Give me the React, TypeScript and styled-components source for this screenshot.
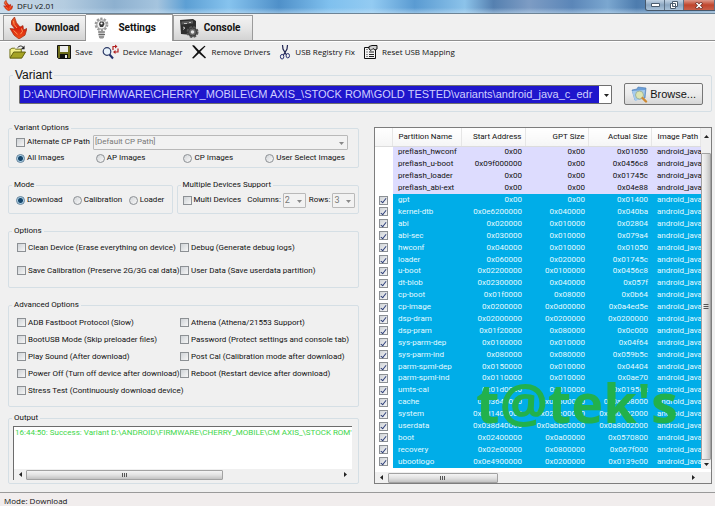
import React from 'react';
import styled, { createGlobalStyle, css } from 'styled-components';

const small = `'Roboto', 'Liberation Sans', sans-serif`;
const arial = `'Liberation Sans', Arial, sans-serif`;
const segoe = `'Open Sans', 'Noto Sans', sans-serif`;

const GlobalStyle = createGlobalStyle`
  *, *::before, *::after { box-sizing: border-box; }
  body { margin: 0; background: #f0f0f0; color: #111; font: 8px/10px ${small}; }
  button, select, input, textarea { font: inherit; color: inherit; margin: 0; }
`;

const Window = styled.div`
  min-height: 100vh;
  display: flex;
  flex-direction: column;
`;

/* ---------- title bar ---------- */
const TitleBar = styled.header`
  display: flex;
  align-items: flex-start;
  height: 14px;
  padding-left: 3px;
  border-bottom: 1px solid #6d8496;
  background:
    linear-gradient(180deg, transparent 60%, rgba(205, 228, 246, 0.5) 100%),
    linear-gradient(90deg, #c9d8e6 0%, #b4cce0 9%, #8db0cf 16%, #a5c4de 22%, #5c9fd4 26%, #86c3ee 32%,
      #4f90c9 39%, #7fc0ee 46%, #93cbf2 52%, #5a9bd2 58%, #8cc3ea 65%, #5580b0 69%, #7d9cc4 74%,
      #5b86b8 80%, #7ba7d0 85%, #4d7cae 89%, #88a9c8 100%);
`;
const Title = styled.h1`
  flex: 1;
  margin: 0;
  padding-left: 4px;
  font: 400 8px/11px ${segoe};
`;
const WindowButtons = styled.div`
  display: flex;
  border: 1px solid #46586b;
  border-width: 0 0 1px 1px;
  border-radius: 0 0 0 3px;
  overflow: hidden;
`;
const WindowButton = styled.button<{ $close?: boolean }>`
  display: flex;
  align-items: center;
  justify-content: center;
  width: ${p => (p.$close ? 31 : 19)}px;
  height: 10px;
  padding: 0;
  border: 0;
  border-right: 1px solid #5d7186;
  background: ${p => (p.$close
    ? 'linear-gradient(#dd9a8c, #c0452c 50%, #c9604a)'
    : 'linear-gradient(#c2d3e4, #8ba6c1 50%, #a9c2d9)')};
`;

/* ---------- tabs ---------- */
const Tabs = styled.nav`
  display: flex;
  align-items: flex-end;
  height: 27px;
  padding-left: 3px;
  border-bottom: 1px solid #8f8f8f;
  box-shadow: 0 1px 0 #fff;
`;
const Tab = styled.button<{ $active?: boolean; $gap: number; $end: number }>`
  display: flex;
  align-items: center;
  gap: ${p => p.$gap}px;
  height: ${p => (p.$active ? 27 : 25)}px;
  margin-bottom: ${p => (p.$active ? -1 : 0)}px;
  padding: 0 ${p => p.$end}px 0 ${p => (p.$active ? 8 : 5)}px;
  border: 1px solid #9b9b9b;
  border-bottom: 0;
  border-left-width: ${p => (p.$active ? 0 : 1)}px;
  background: ${p => (p.$active ? '#fff' : 'linear-gradient(#f3f3f3, #e6e6e6 50%, #d3d3d3)')};
  font: 700 10px/12px ${small};
  color: #111;
`;

/* ---------- toolbar ---------- */
const Toolbar = styled.div`
  display: flex;
  flex-wrap: wrap;
  gap: 0 9px;
  padding: 1px 9px 0;
`;
const ToolButton = styled.button`
  display: flex;
  align-items: center;
  gap: 4px;
  height: 20px;
  padding: 0;
  border: 0;
  background: none;
  font: 8px/10px ${segoe};
`;

/* ---------- groups ---------- */
const Group = styled.fieldset`
  min-width: 0;
  margin: 0;
  padding: 0;
  border: 1px solid #d5dfe5;
  border-radius: 2px;
`;
const GroupBody = styled.div<{ $pad: string }>`
  padding: ${p => p.$pad};
`;
const Legend = styled.legend<{ $large?: boolean }>`
  margin-left: 3px;
  padding: 0 2px;
  ${p => p.$large && css`font: 12px/14px ${arial};`}
`;
const VariantGroup = styled(Group)`
  margin: 6px 3px 0 9px;
`;
const VariantRow = styled.div`
  display: flex;
  align-items: center;
  gap: 12px;
  padding: 1px 8px 6px 9px;
`;
const Main = styled.main`
  display: flex;
  align-items: stretch;
  gap: 15px;
  margin: 11px 3px 8px 8px;
`;
const LeftColumn = styled.div`
  flex: 352 1 0;
  min-width: 0;
  display: flex;
  flex-direction: column;
  gap: 6px;
`;
const Stack = styled.div`
  display: flex;
  flex-direction: column;
  gap: 12px;
`;
const Pair = styled.div`
  display: grid;
  grid-template-columns: minmax(0, 165fr) minmax(0, 183fr);
  gap: 4px;
`;
const OptionGrid = styled.div<{ $cols: number[]; $row: number }>`
  display: grid;
  grid-template-columns: ${p => p.$cols.map(c => `minmax(0, ${c}fr)`).join(' ')};
  grid-auto-rows: ${p => p.$row}px;
  align-items: center;
`;
const InlineRow = styled.div<{ $gap: number }>`
  display: flex;
  align-items: center;
  height: 16px;
  gap: ${p => p.$gap}px;
`;

const Label = styled.label`
  display: inline-flex;
  align-items: center;
  gap: 2px;
  white-space: nowrap;
`;
const CheckBox = styled.input.attrs({ type: 'checkbox' })`
  appearance: none;
  flex: none;
  display: grid;
  place-items: center;
  width: 9px;
  height: 9px;
  border: 1px solid #8c9094;
  background: linear-gradient(135deg, #cfd3d7, #f6f6f6);
  &:checked::before {
    content: '';
    width: 3px;
    height: 6px;
    border: solid #2b3d78;
    border-width: 0 1px 1px 0;
    transform: rotate(38deg);
  }
`;
const Radio = styled.input.attrs({ type: 'radio' })`
  appearance: none;
  flex: none;
  width: 9px;
  height: 9px;
  border: 1px solid #8c9094;
  border-radius: 50%;
  background: linear-gradient(135deg, #d3d6d9, #f8f8f8);
  &:checked {
    border-color: #5f7f99;
    background: radial-gradient(circle, #16466b 0 2px, #a9cfe6 3px, #dff0fa 4px);
  }
`;

const ComboFrame = styled.span<{ $variant?: boolean; $grow?: boolean }>`
  position: relative;
  display: flex;
  flex: ${p => (p.$grow || p.$variant ? '1 1 0' : 'none')};
  min-width: 0;
  svg {
    position: absolute;
    right: ${p => (p.$variant ? 3 : 4)}px;
    top: calc(50% - 1px);
    pointer-events: none;
  }
`;
const Combo = styled.select`
  appearance: none;
  width: 100%;
  height: 15px;
  padding: 0 14px 0 1px;
  border: 1px solid #b9b9b9;
  border-radius: 1px;
  background: #f2f2f2;
  color: #777;
  opacity: 1;
`;
const NumberCombo = styled(Combo)`
  width: 23px;
  padding: 0 10px 0 1px;
  font-size: 9px;
`;
const VariantCombo = styled(Combo)`
  height: 19px;
  padding: 0 14px 0 3px;
  border: 1px solid #6f6f6f;
  background: linear-gradient(90deg, #1f16cc calc(100% - 12px), #fff calc(100% - 12px));
  color: #cfcfff;
  font: 11px/16px ${arial};
`;
const Browse = styled.button`
  display: flex;
  align-items: center;
  gap: 2px;
  height: 22px;
  padding: 0 6px;
  border: 1px solid #777;
  border-radius: 2px;
  background: linear-gradient(#f3f3f3, #ebebeb 50%, #d6d6d6);
  font: 11px/13px ${arial};
`;

/* ---------- output ---------- */
const OutputBox = styled.div`
  display: flex;
  flex-direction: column;
  height: 54px;
  border: solid #6c6c6c;
  border-width: 1px 0 0 1px;
  background: #fff;
`;
const OutputText = styled.textarea`
  flex: 1;
  display: block;
  min-height: 0;
  padding: 1px 0 0 1px;
  border: 0;
  outline: 0;
  resize: none;
  overflow: hidden;
  background: none;
  color: #3ed64a;
  white-space: pre;
`;

/* ---------- scroll bars ---------- */
const HBar = styled.div`
  display: flex;
  align-items: center;
  height: 11px;
  flex: none;
  background: #f0f0f0;
`;
const HSpace = styled.div<{ $grow: number }>`
  flex: ${p => p.$grow} 1 0;
`;
const Thumb = styled.div<{ $grow: number; $vertical?: boolean }>`
  flex: ${p => p.$grow} 1 0;
  display: flex;
  align-items: center;
  justify-content: center;
  ${p => (p.$vertical ? 'width: 10px;' : 'height: 10px;')}
  border: 1px solid #a2a2a2;
  border-radius: 1px;
  background: linear-gradient(${p => (p.$vertical ? '90deg' : '180deg')}, #f4f4f4, #e2e2e2 50%, #c2c2c2);
`;
const ArrowCell = styled.div<{ $w: number; $h: number }>`
  flex: none;
  display: flex;
  align-items: center;
  justify-content: center;
  width: ${p => p.$w}px;
  height: ${p => p.$h}px;
`;
const VBar = styled.div`
  flex: none;
  display: flex;
  flex-direction: column;
  width: 10px;
  background: #f0f0f0;
`;
const TopArrowCell = styled(ArrowCell)`
  margin-bottom: 9px;
`;

/* ---------- partition list ---------- */
const ListFrame = styled.section`
  position: relative;
  flex: 337 1 0;
  min-width: 0;
  display: flex;
  flex-direction: column;
  margin-top: 4px;
  border: 1px solid #7d7d7d;
  background: #fff;
`;
const ListBody = styled.div`
  flex: 1;
  display: flex;
  min-height: 0;
  margin-bottom: 3px;
`;
const TableClip = styled.div`
  flex: 1;
  min-width: 0;
  overflow: hidden;
`;
const Table = styled.table`
  width: 100%;
  height: 340px;
  table-layout: fixed;
  border-collapse: collapse;
`;
const Col = styled.col<{ $w?: number }>`
  ${p => p.$w && `width: ${p.$w}px;`}
`;
const Head = styled.th<{ $right?: boolean }>`
  height: 18px;
  padding: 0 4px 0 5px;
  border-right: 1px solid #e6e6e6;
  border-bottom: 1px solid #dcdcdc;
  background: linear-gradient(#fff, #f5f5f5);
  font-weight: 400;
  text-align: ${p => (p.$right ? 'right' : 'left')};
  white-space: nowrap;
  overflow: hidden;
`;
const Row = styled.tr<{ $pre: boolean }>`
  background: ${p => (p.$pre ? '#dddcfe' : '#00ade8')};
  color: ${p => (p.$pre ? '#111' : '#e4faff')};
`;
const Cell = styled.td<{ $right?: boolean }>`
  padding: 0 4px 0 5px;
  text-align: ${p => (p.$right ? 'right' : 'left')};
  white-space: nowrap;
  overflow: hidden;
`;
const TickCell = styled.td`
  padding: 0 0 0 4px;
  background: #fff;
`;
const Watermark = styled.div`
  position: absolute;
  left: 101px;
  bottom: 54px;
  color: #22b14c;
  font: 700 54px/54px ${segoe};
  white-space: nowrap;
  pointer-events: none;
`;
const StatusBar = styled.footer`
  flex: 1;
  padding: 2px 4px 0;
  border-top: 1px solid #9a9a9a;
  background: #f1eded;
  font: 8px/11px ${segoe};
`;

/* ---------- icons ---------- */
const Flame = ({ w, h }: { w: number; h: number }) => (
  <svg width={w} height={h} viewBox="0 0 18 23" preserveAspectRatio="none" aria-hidden="true">
    <defs>
      <linearGradient id="flame" x1="0" y1="0" x2="0" y2="1">
        <stop offset="0" stopColor="#e8632a" /><stop offset="0.5" stopColor="#d8210c" /><stop offset="1" stopColor="#f0501a" />
      </linearGradient>
    </defs>
    <path d="M5.500 0Q1 4 2.500 8L6 12.500 1 12 5 19l5 4 6-4 2-7-3.500 1.500L14 9l-3 1.500L7.500 6z" fill="url(#flame)" stroke="#9c2a14" strokeWidth=".7" />
    <path d="M4.500 4Q4 8 8 11.500M4.500 14l4 4M12.500 12l1 3-2 3" stroke="#ff9a58" fill="none" strokeWidth="1" />
  </svg>
);
const GearBulb = () => (
  <svg width="15" height="23" viewBox="0 0 15 23" aria-hidden="true">
    <circle cx="7.5" cy="7.5" r="5.6" fill="#e4e4e4" stroke="#9a9a9a" strokeWidth="2.6" strokeDasharray="2.2 1.3" />
    <circle cx="7.5" cy="7.5" r="4.6" fill="#f3f3f3" stroke="#a2a2a2" />
    <path d="M6 4.500h3.500l1 2.500-1.500 3H6L5 7z" fill="#3c3c3c" />
    <circle cx="7.500" cy="6.500" r="1.100" fill="#fff" />
    <path d="M4.500 14h6v5l-1.500 3h-3l-1.500-3z" fill="#c4c4c4" />
    <path d="M4 15h7M4.500 17.500h6.500M5 20h5" stroke="#666" />
  </svg>
);
const ConsoleGear = () => (
  <svg width="20" height="21" viewBox="0 0 20 21" aria-hidden="true">
    <path d="M1 2 14 1l3 2v9L13 17 2 16z" fill="#2d2d2d" />
    <path d="M2.500 3.500 14 2.500v3L2.500 6.500z" fill="#5b5b5b" />
    <path d="M4 9l2 1-2 1.500M5 5.500h3M10 4.500h2" stroke="#ddd" fill="none" strokeWidth=".8" />
    <circle cx="13.500" cy="14" r="4.800" fill="#555" stroke="#555" strokeWidth="2.400" strokeDasharray="2.400 1.400" />
    <circle cx="13.500" cy="14" r="4" fill="#666" stroke="#3a3a3a" />
    <circle cx="13.500" cy="14" r="1.800" fill="#e4e4e4" />
  </svg>
);
const FolderIcon = () => (
  <svg width="17" height="16" viewBox="0 0 18 16" aria-hidden="true">
    <path d="M1 14V5h1l1-1h3l1 1h6v3" fill="#f3f08a" stroke="#6b6a10" />
    <path d="M1 14.500 5 8h12.500l-4 6.500z" fill="#a5a324" stroke="#5a590c" />
    <path d="M9 3.500Q12 0 15 3" stroke="#222" fill="none" />
    <path d="M16.500 1v4h-4z" fill="#222" />
  </svg>
);
const FloppyIcon = () => (
  <svg width="14" height="14" viewBox="0 0 14 14" aria-hidden="true">
    <path d="M.5.5h13v13H1.500l-1-1z" fill="#6e6d1c" stroke="#111" />
    <path d="M3 1h8v6H3z" fill="#ececec" />
    <path d="M3 9h8v4.500H3z" fill="#111" />
    <path d="M8 10h2v3H8z" fill="#ececec" />
  </svg>
);
const SearchIcon = () => (
  <svg width="17" height="16" viewBox="0 0 17 16" aria-hidden="true">
    <circle cx="5" cy="7.500" r="3.800" fill="#e9f3fb" stroke="#2c3a66" strokeWidth="1.200" />
    <path d="M7.500 10.500 11 14.500" stroke="#23306b" strokeWidth="2" />
    <path d="M11 6V2.500h2.500M16 4.500V8h-3" stroke="#b32020" fill="none" strokeWidth="1.200" />
    <path d="M13 .5l2.500 2L13 4.500zM13.500 6v4L11 8z" fill="#b32020" />
  </svg>
);
const CrossIcon = () => (
  <svg width="16" height="14" viewBox="0 0 16 14" aria-hidden="true">
    <path d="M1 .5 3 .2 8 5.500 13.500.8l1 .4L9.300 6.800 15 12.500l-1 1L8 8.300 2.500 13.500 1 13 6.500 7z" fill="#111" />
  </svg>
);
const ScissorsIcon = () => (
  <svg width="12" height="16" viewBox="0 0 11 16" aria-hidden="true">
    <path d="M3 1l.5 4L7 11M8 1l-.5 4L4 11" stroke="#1d2150" fill="none" strokeWidth="1.200" />
    <ellipse cx="2.600" cy="12.700" rx="1.700" ry="2.300" fill="none" stroke="#2a3070" />
    <ellipse cx="8.300" cy="11.700" rx="1.700" ry="2.200" fill="none" stroke="#2a3070" />
  </svg>
);
const PropertiesIcon = () => (
  <svg width="14" height="14" viewBox="0 0 14 14" aria-hidden="true">
    <path d="M.5 2.500h11v11H.5z" fill="#f4f4f4" stroke="#111" />
    <path d="M5 1.500 8 .5h5v3.500l-2 1-2-1.500-2 2-2-1.500z" fill="#cfcfcf" stroke="#111" />
    <path d="M2.500 7h1M5 7h5M2.500 9.500h1M5 9.500h5M2.500 11.500h1M5 11.500h5M2.500 4.500h1" stroke="#222" />
  </svg>
);
const BrowseIcon = () => (
  <svg width="17" height="17" viewBox="0 0 17 17" aria-hidden="true">
    <path d="M1 4l5-1 1-2 8 1-1 10-10 2z" fill="#6b9fd8" stroke="#4a78b0" strokeWidth=".6" />
    <path d="M1 5l13-1-1 8-9 3z" fill="#a6cbee" />
    <circle cx="8.500" cy="9" r="4" fill="#e6e9a4" fillOpacity=".85" stroke="#9db4a0" />
    <path d="M11.500 12l3.500 3.500" stroke="#cf8a32" strokeWidth="2.400" strokeLinecap="round" />
  </svg>
);
const Arrow = ({ dir, color = '#222' }: { dir: 'up' | 'down' | 'left' | 'right'; color?: string }) => {
  const d = { up: 'M0 4 2.500 1 5 4z', down: 'M0 1h5L2.500 4z', left: 'M4 0v5L1 2.500z', right: 'M1 0v5l3-2.500z' }[dir];
  return <svg width="5" height="5" viewBox="0 0 5 5" aria-hidden="true"><path d={d} fill={color} /></svg>;
};
const Grip = ({ vertical }: { vertical?: boolean }) => (
  <svg width="6" height="6" viewBox="0 0 6 6" aria-hidden="true">
    <path d={vertical ? 'M.5.5h5M.5 2.500h5M.5 4.500h5' : 'M.5 1v4M2.500 1v4M4.500 1v4'} stroke="#555" />
  </svg>
);

/* ---------- data ---------- */
const partitions: [string, string, string, string][] = [
  ['preflash_hwconf', '0x00', '0x00', '0x01050'],
  ['preflash_u-boot', '0x09f000000', '0x00', '0x0456c8'],
  ['preflash_loader', '0x00', '0x00', '0x01745c'],
  ['preflash_abi-ext', '0x00', '0x00', '0x04e88'],
  ['gpt', '0x00', '0x00', '0x01400'],
  ['kernel-dtb', '0x0e6200000', '0x040000', '0x040ba'],
  ['abi', '0x020000', '0x010000', '0x02804'],
  ['abi-sec', '0x030000', '0x010000', '0x079a4'],
  ['hwconf', '0x040000', '0x010000', '0x01050'],
  ['loader', '0x060000', '0x020000', '0x01745c'],
  ['u-boot', '0x02200000', '0x0100000', '0x0456c8'],
  ['dt-blob', '0x02300000', '0x040000', '0x057f'],
  ['cp-boot', '0x01f0000', '0x08000', '0x0b64'],
  ['cp-image', '0x0200000', '0x0d00000', '0x0a4ed5e'],
  ['dsp-dram', '0x02000000', '0x0200000', '0x0200000'],
  ['dsp-pram', '0x01f20000', '0x080000', '0x0c000'],
  ['sys-parm-dep', '0x0100000', '0x010000', '0x04f64'],
  ['sys-parm-ind', '0x080000', '0x080000', '0x059b5c'],
  ['parm-spml-dep', '0x0150000', '0x010000', '0x04404'],
  ['parm-spml-ind', '0x0110000', '0x010000', '0x0ae70'],
  ['umts-cal', '0x01d0000', '0x010000', '0x01956c'],
  ['cache', '0x03640000', '0x09600000', '0x0a008000'],
  ['system', '0x0d1400000', '0x02bc00000', '0x0a0002000'],
  ['userdata', '0x038d40000', '0x0abbc0000', '0x0a8002000'],
  ['boot', '0x02400000', '0x0a00000', '0x0570800'],
  ['recovery', '0x02e00000', '0x0800000', '0x067f000'],
  ['ubootlogo', '0x0e4900000', '0x0200000', '0x0139c00'],
];
const options = [
  'Clean Device (Erase everything on device)', 'Debug (Generate debug logs)',
  'Save Calibration (Preserve 2G/3G cal data)', 'User Data (Save userdata partition)',
];
const advanced = [
  'ADB Fastboot Protocol (Slow)', 'Athena (Athena/21553 Support)',
  'BootUSB Mode (Skip preloader files)', 'Password (Protect settings and console tab)',
  'Play Sound (After download)', 'Post Cal (Calibration mode after download)',
  'Power Off (Turn off device after download)', 'Reboot (Restart device after download)',
  'Stress Test (Continuously download device)',
];

const Check = ({ text }: { text: string }) => <Label><CheckBox />{text}</Label>;
const Choice = ({ name, text, on }: { name: string; text: string; on?: boolean }) => (
  <Label><Radio name={name} defaultChecked={on} />{text}</Label>
);
const NumberField = ({ text, value }: { text: string; value: string }) => (
  <Label>
    {text}
    <ComboFrame>
      <NumberCombo disabled><option>{value}</option></NumberCombo>
      <Arrow dir="down" color="#888" />
    </ComboFrame>
  </Label>
);

export default function App() {
  return (
    <Window>
      <GlobalStyle />
      <TitleBar>
        <Flame w={10} h={11} />
        <Title>DFU v2.01</Title>
        <WindowButtons>
          <WindowButton aria-label="Minimize">
            <svg width="9" height="4"><path d="M.5.5h8v3h-8z" fill="#fff" stroke="#4b5c6e" /></svg>
          </WindowButton>
          <WindowButton aria-label="Restore">
            <svg width="8" height="8"><path d="M2.500.5h5v5h-5zM.5 2.500h5v5h-5z" fill="#fff" stroke="#4b5c6e" /><path d="M2.500 4.500h1v1h-1z" fill="#4b5c6e" /></svg>
          </WindowButton>
          <WindowButton $close aria-label="Close">
            <svg width="8" height="7"><path d="M1 .5 7 6.500M7 .5 1 6.500" stroke="#6c2f28" strokeWidth="3" /><path d="M1.500 1 6.500 6M6.500 1 1.500 6" stroke="#fff" strokeWidth="1.600" /></svg>
          </WindowButton>
        </WindowButtons>
      </TitleBar>

      <Tabs>
        <Tab $gap={8} $end={6}><Flame w={18} h={22} />Download</Tab>
        <Tab $active $gap={9} $end={16}><GearBulb />Settings</Tab>
        <Tab $gap={5} $end={12}><ConsoleGear />Console</Tab>
      </Tabs>

      <Toolbar>
        <ToolButton><FolderIcon />Load</ToolButton>
        <ToolButton><FloppyIcon />Save</ToolButton>
        <ToolButton><SearchIcon />Device Manager</ToolButton>
        <ToolButton><CrossIcon />Remove Drivers</ToolButton>
        <ToolButton><ScissorsIcon />USB Registry Fix</ToolButton>
        <ToolButton><PropertiesIcon />Reset USB Mapping</ToolButton>
      </Toolbar>

      <VariantGroup>
        <Legend $large>Variant</Legend>
        <VariantRow>
          <ComboFrame $variant>
            <VariantCombo aria-label="Variant">
              <option>{'D:\\ANDROID\\FIRMWARE\\CHERRY_MOBILE\\CM AXIS_\\STOCK ROM\\GOLD TESTED\\variants\\android_java_c_edr'}</option>
            </VariantCombo>
            <Arrow dir="down" />
          </ComboFrame>
          <Browse><BrowseIcon />Browse...</Browse>
        </VariantRow>
      </VariantGroup>

      <Main>
        <LeftColumn>
          <Stack>
            <Group>
              <Legend>Variant Options</Legend>
              <GroupBody $pad="1px 10px 1px 7px">
                <InlineRow $gap={3}>
                  <Check text="Alternate CP Path" />
                  <ComboFrame $grow>
                    <Combo disabled aria-label="CP path"><option>[Default CP Path]</option></Combo>
                    <Arrow dir="down" color="#888" />
                  </ComboFrame>
                </InlineRow>
                <OptionGrid $cols={[80, 88, 82, 83]} $row={16}>
                  <Choice name="images" text="All Images" on />
                  <Choice name="images" text="AP Images" />
                  <Choice name="images" text="CP Images" />
                  <Choice name="images" text="User Select Images" />
                </OptionGrid>
              </GroupBody>
            </Group>

            <Pair>
              <Group>
                <Legend>Mode</Legend>
                <GroupBody $pad="2px 0 5px 7px">
                  <OptionGrid $cols={[57, 56, 43]} $row={16}>
                    <Choice name="mode" text="Download" on />
                    <Choice name="mode" text="Calibration" />
                    <Choice name="mode" text="Loader" />
                  </OptionGrid>
                </GroupBody>
              </Group>
              <Group>
                <Legend>Multiple Devices Support</Legend>
                <GroupBody $pad="2px 2px 5px 5px">
                  <InlineRow $gap={6}>
                    <Check text="Multi Devices" />
                    <InlineRow $gap={3}>
                      <NumberField text="Columns:" value="2" />
                      <NumberField text="Rows:" value="3" />
                    </InlineRow>
                  </InlineRow>
                </GroupBody>
              </Group>
            </Pair>

            <Group>
              <Legend>Options</Legend>
              <GroupBody $pad="0 0 5px 8px">
                <OptionGrid $cols={[163, 178]} $row={23}>
                  {options.map(t => <Check key={t} text={t} />)}
                </OptionGrid>
              </GroupBody>
            </Group>

            <Group>
              <Legend>Advanced Options</Legend>
              <GroupBody $pad="4px 0 7px 8px">
                <OptionGrid $cols={[163, 178]} $row={17}>
                  {advanced.map(t => <Check key={t} text={t} />)}
                </OptionGrid>
              </GroupBody>
            </Group>
          </Stack>

          <Group>
            <Legend>Output</Legend>
            <GroupBody $pad="3px 6px 3px 4px">
              <OutputBox>
                <OutputText
                  readOnly
                  wrap="off"
                  aria-label="Output"
                  defaultValue={"16:44:50: Success: Variant D:\\ANDROID\\FIRMWARE\\CHERRY_MOBILE\\CM AXIS_\\STOCK ROM'"}
                />
                <HBar aria-hidden="true">
                  <ArrowCell $w={12} $h={11}><Arrow dir="left" /></ArrowCell>
                  <Thumb $grow={197}><Grip /></Thumb>
                  <HSpace $grow={117} />
                  <ArrowCell $w={13} $h={11}><Arrow dir="right" /></ArrowCell>
                </HBar>
              </OutputBox>
            </GroupBody>
          </Group>
        </LeftColumn>

        <ListFrame>
          <ListBody>
            <TableClip>
              <Table>
                <colgroup>
                  <Col $w={18} /><Col $w={69} /><Col $w={64} /><Col $w={63} /><Col $w={63} /><Col />
                </colgroup>
                <thead>
                  <tr>
                    <Head aria-label="Selected" />
                    <Head>Partition Name</Head>
                    <Head $right>Start Address</Head>
                    <Head $right>GPT Size</Head>
                    <Head $right>Actual Size</Head>
                    <Head>Image Path</Head>
                  </tr>
                </thead>
                <tbody>
                  {partitions.map(([name, start, gpt, actual], i) => (
                    <Row key={name} $pre={i < 4}>
                      <TickCell>{i >= 4 && <CheckBox defaultChecked aria-label={name} />}</TickCell>
                      <Cell>{name}</Cell>
                      <Cell $right>{start}</Cell>
                      <Cell $right>{gpt}</Cell>
                      <Cell $right>{actual}</Cell>
                      <Cell>android_java</Cell>
                    </Row>
                  ))}
                </tbody>
              </Table>
            </TableClip>
            <VBar aria-hidden="true">
              <TopArrowCell $w={10} $h={16}><Arrow dir="up" /></TopArrowCell>
              <Thumb $grow={1} $vertical><Grip vertical /></Thumb>
              <ArrowCell $w={10} $h={9}><Arrow dir="down" /></ArrowCell>
            </VBar>
          </ListBody>
          <HBar aria-hidden="true">
            <ArrowCell $w={13} $h={11}><Arrow dir="left" /></ArrowCell>
            <Thumb $grow={108}><Grip /></Thumb>
            <HSpace $grow={178} />
            <ArrowCell $w={36} $h={11}><Arrow dir="right" /></ArrowCell>
          </HBar>
          <Watermark>t@tek's</Watermark>
        </ListFrame>
      </Main>

      <StatusBar>Mode: Download</StatusBar>
    </Window>
  );
}
